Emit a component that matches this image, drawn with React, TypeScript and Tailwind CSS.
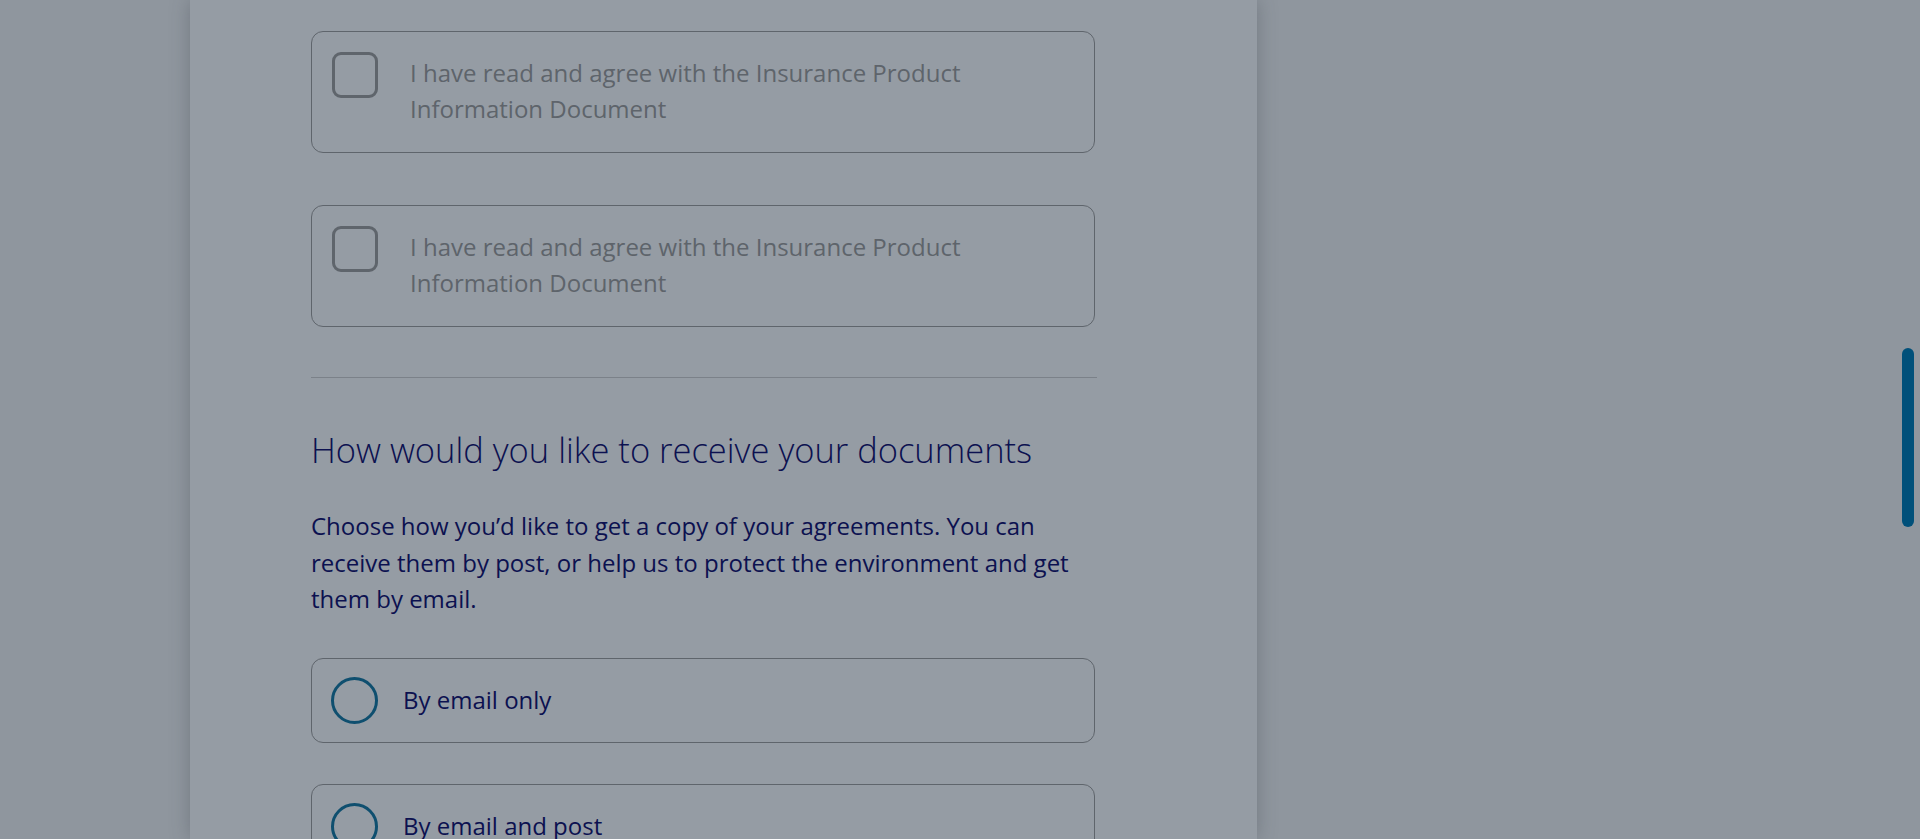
const font = { fontFamily: "'Open Sans', 'Noto Sans', sans-serif" };

const CheckCard = ({ label }: { label: string }) => (
  <div className="flex h-[122px] items-start rounded-[12px] border-[1.5px] border-[#5f656c] pl-[20px] pt-[20px]">
    <div className="h-[46px] w-[46px] shrink-0 rounded-[9px] border-[3px] border-[#5f656c]" />
    <p className="ml-[32px] mt-[3px] w-[620px] text-[24px] leading-[36px] text-[#5e646b]">
      {label}
    </p>
  </div>
);

const RadioCard = ({ label }: { label: string }) => (
  <div className="flex h-[85px] items-center rounded-[12px] border-[1.5px] border-[#5f656c] pl-[19px]">
    <div className="h-[47px] w-[47px] shrink-0 rounded-full border-[3px] border-[#0f4f6f]" />
    <span className="ml-[25px] text-[24px] text-[#0c1150]">{label}</span>
  </div>
);

export default function App() {
  return (
    <div className="relative h-[839px] overflow-hidden bg-[#8f969e]" style={font}>
      <div className="ml-[190px] h-full w-[1067px] bg-[#959ca4] pl-[121px] pt-[31px] shadow-[0_0_18px_rgba(60,66,74,0.35)]">
        <div className="w-[784px]">
          <CheckCard label="I have read and agree with the Insurance Product Information Document" />
          <div className="mt-[52px]">
            <CheckCard label="I have read and agree with the Insurance Product Information Document" />
          </div>
          <div className="mt-[50px] h-px w-[786px] bg-[#7b8189]" />
          <h2 className="mt-[50px] text-[34.5px] font-light leading-[44px] text-[#0c1150]">
            How would you like to receive your documents
          </h2>
          <p className="mt-[36px] w-[784px] text-[24px] leading-[36.5px] text-[#0c1150]">
            Choose how you’d like to get a copy of your agreements. You can receive them by
            post, or help us to protect the environment and get them by email.
          </p>
          <div className="mt-[40px] flex flex-col gap-[41px]">
            <RadioCard label="By email only" />
            <RadioCard label="By email and post" />
          </div>
        </div>
      </div>
      <div className="absolute left-[1902px] top-[348px] h-[179px] w-[12px] rounded-full bg-[#00507a]" />
    </div>
  );
}
